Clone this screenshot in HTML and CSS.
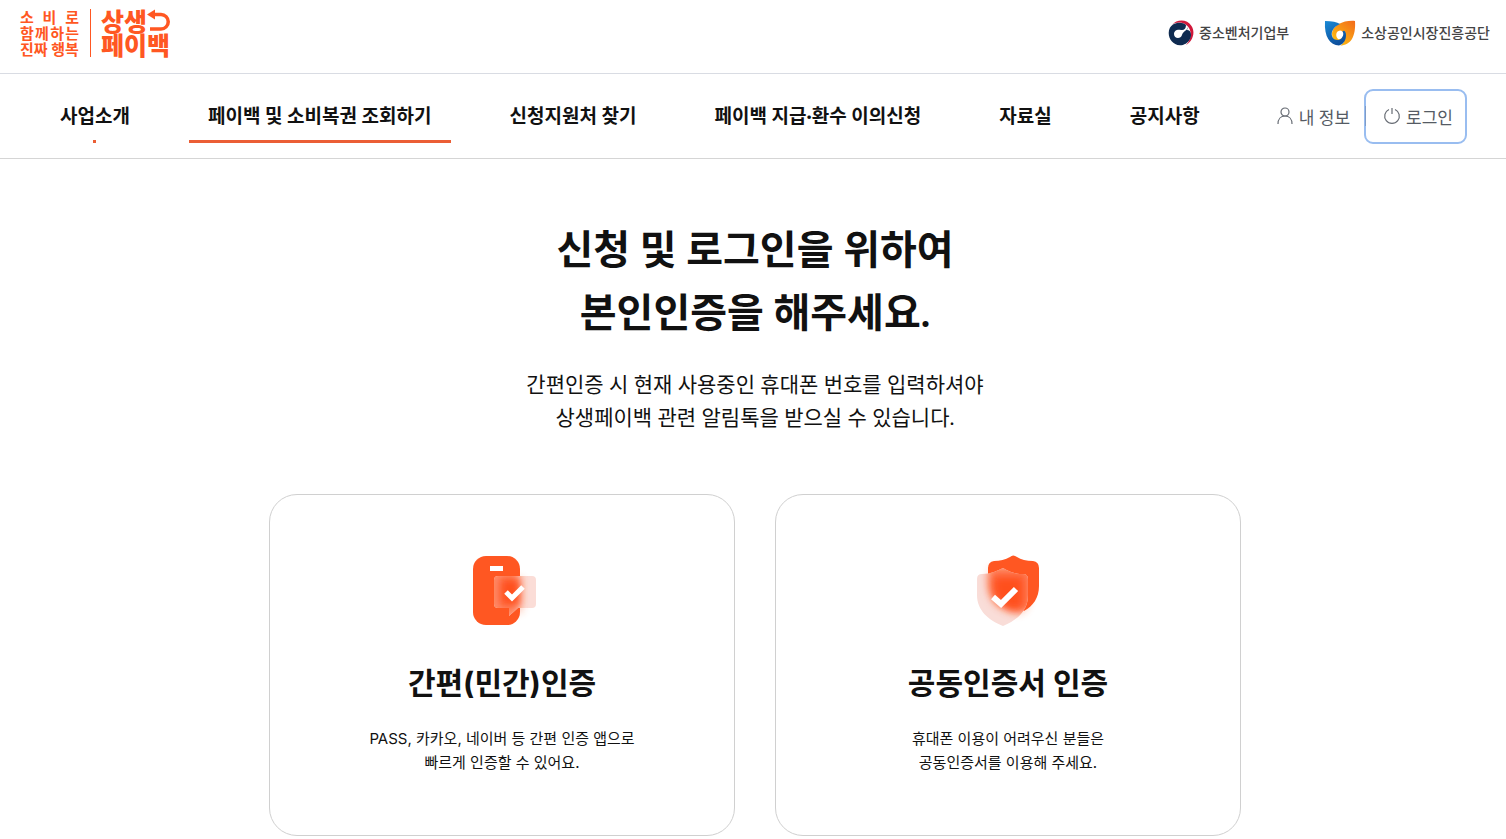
FILE: index.html
```html
<!DOCTYPE html>
<html lang="ko">
<head>
    <meta charset="UTF-8">
    <meta name="viewport" content="width=device-width, initial-scale=1.0">
    <title>상생페이백</title>
    <link rel="stylesheet" href="styles.css">
</head>
<body>
    <header>
        <div class="top-bar">
            <a href="#" class="logo">
                <span class="slogan">
                    <span class="slogan-line"><span>소</span><span>비</span><span>로</span></span>
                    <span class="slogan-line"><span>함</span><span>께</span><span>하</span><span>는</span></span>
                    <span class="slogan-line">진짜 행복</span>
                </span>
                <span class="brand">
                    <span class="brand-line">상생<svg width="24" height="24" viewBox="0 0 24 24" aria-hidden="true"><path d="M6 5.500H14A6.500 6.500 0 0 1 14 20H3" fill="none" stroke="#ff5722" stroke-width="3.500"/><path d="M0 5.500L8 0.500V10.500Z" fill="#ff5722"/></svg></span>
                    <span class="brand-line">페이백</span>
                </span>
            </a>
            <div class="partners">
                <a href="#" class="partner">
                    <svg width="26" height="26" viewBox="0 0 26 26" aria-hidden="true">
                        <path d="M4 5C9 -1 19 -1 23.500 6C28 13 24 22 18 25C23 20 24 13 21 8C17 2 9 1 4 5Z" fill="#d0173a"/>
                        <path d="M5 4.500C9 2 15 2 18 5C20 7 20 8 19 10C23 10 24 15 22 19C20 23 16 25.300 12 25.300C5 25 0.700 19 0.700 13C0.700 9 2.500 6 5 4.500Z" fill="#0f2b50"/>
                        <path d="M20 7C19 11 15 11 14 15C13 19 6 19 6 14C6 10 10 9 13 10C16 10.500 18 9 18 5Z" fill="#fff"/>
                    </svg>
                    <span>중소벤처기업부</span>
                </a>
                <a href="#" class="partner">
                    <svg width="32" height="26" viewBox="0 0 32 26" aria-hidden="true">
                        <defs>
                            <linearGradient id="leafBlue" x1="0" y1="0" x2="0.500" y2="1"><stop offset="0" stop-color="#1a8ad6"/><stop offset="1" stop-color="#0d4f9c"/></linearGradient>
                            <linearGradient id="leafOrange" x1="1" y1="0" x2="0.200" y2="1"><stop offset="0" stop-color="#f26a1b"/><stop offset="1" stop-color="#fdc010"/></linearGradient>
                        </defs>
                        <path d="M31 1C20 0 9 5 8 13C8 17 9 20 12 22H20C18 24 18 25 16 25.500C27 25.500 32 16 31 1Z" fill="url(#leafOrange)"/>
                        <path d="M1 1C8 1 13 2 16 4C9 7 7 12 8 16C9 19 11 20 14 20C17 20 19 17 18 13C19 9 22 11 22 15C22 20 20 24 15 25.500C6 25 0 17 1 1Z" fill="url(#leafBlue)"/>
                        <path d="M14 19C11 16 12 11 16 10.500C20 11 20 15 18 17.500C17 19 15.500 19.500 14 19Z" fill="#fff"/>
                    </svg>
                    <span>소상공인시장진흥공단</span>
                </a>
            </div>
        </div>
        <nav class="main-nav">
            <ul class="menu">
                <li class="dot"><a href="#">사업소개</a></li>
                <li class="active"><a href="#">페이백 및 소비복권 조회하기</a></li>
                <li><a href="#">신청지원처 찾기</a></li>
                <li><a href="#">페이백 지급·환수 이의신청</a></li>
                <li><a href="#">자료실</a></li>
                <li><a href="#">공지사항</a></li>
            </ul>
            <div class="user-menu">
                <a href="#" class="my-info">
                    <svg width="16" height="18" viewBox="0 0 16 18" fill="none" stroke="#666b73" stroke-width="1.200" aria-hidden="true"><circle cx="8" cy="5" r="4"/><path d="M1 17C1 12 4 9 8 9S15 12 15 17"/></svg>
                    내 정보
                </a>
                <button type="button" class="login">
                    <svg width="18" height="18" viewBox="0 0 18 18" fill="none" stroke="#666b73" stroke-width="1.200" aria-hidden="true"><path d="M6 2.500A7.300 7.300 0 1 0 12 2.500M9 1V7"/></svg>
                    로그인
                </button>
            </div>
        </nav>
    </header>

    <main>
        <h1>신청 및 로그인을 위하여<br>본인인증을 해주세요.</h1>
        <p class="guide">간편인증 시 현재 사용중인 휴대폰 번호를 입력하셔야<br>상생페이백 관련 알림톡을 받으실 수 있습니다.</p>

        <div class="cards">
            <a href="#" class="card">
                <svg width="80" height="80" viewBox="0 0 80 80" aria-hidden="true">
                    <defs>
                        <filter id="blur" x="-50%" y="-50%" width="200%" height="200%"><feGaussianBlur stdDeviation="4"/></filter>
                        <clipPath id="bubble"><path d="M36 26H70Q74 26 74 30V54Q74 58 70 58H56L47 66V58H36Q32 58 32 54V30Q32 26 36 26Z"/></clipPath>
                    </defs>
                    <rect x="36" y="28" width="24" height="34" fill="#ff5722" opacity="0.400" filter="url(#blur)"/>
                    <rect x="11" y="6" width="47" height="69" rx="13" fill="#ff5722"/>
                    <rect x="28" y="16" width="13" height="5" fill="#fff"/>
                    <g clip-path="url(#bubble)">
                        <rect x="32" y="26" width="42" height="40" fill="#fbddd7"/>
                        <rect x="20" y="20" width="36" height="50" fill="#ff8a68" filter="url(#blur)"/>
                        <rect x="38" y="28" width="20" height="28" fill="#ff4f1f" filter="url(#blur)"/>
                    </g>
                    <path d="M44 42L50 48L61 37" fill="none" stroke="#fff" stroke-width="5"/>
                </svg>
                <h2>간편(민간)인증</h2>
                <p>PASS, 카카오, 네이버 등 간편 인증 앱으로<br>빠르게 인증할 수 있어요.</p>
            </a>
            <a href="#" class="card">
                <svg width="80" height="80" viewBox="0 0 80 80" aria-hidden="true">
                    <defs>
                        <clipPath id="shield"><path d="M35 18Q38 20 43 22Q48 24 55 24Q60 24 60 29V45C60 60 50 70 35 76C20 70 9 60 9 45V29Q9 24 14 24Q21 24 26 22Q31 20 35 18Z"/></clipPath>
                    </defs>
                    <path d="M22 18H60V56L52 64L22 50Z" fill="#ff5722" opacity="0.400" filter="url(#blur)"/>
                    <path d="M42 7Q45 4 49 7Q55 11 65 11Q71 12 71 18V36C71 48 65 56 56 61L20 36V18Q20 12 26 11Q35 11 42 7Z" fill="#ff5722"/>
                    <g clip-path="url(#shield)">
                        <rect x="9" y="16" width="52" height="61" fill="#f9ddd8"/>
                        <path d="M20 16H66V60Q50 66 38 58Q22 52 20 36Z" fill="#ff7a52" filter="url(#blur)"/>
                        <path d="M25 26H56V56Q48 64 36 57Q25 50 25 38Z" fill="#ff4f1f" filter="url(#blur)"/>
                    </g>
                    <path d="M25 47L33 54L48 39" fill="none" stroke="#fff" stroke-width="6"/>
                </svg>
                <h2>공동인증서 인증</h2>
                <p>휴대폰 이용이 어려우신 분들은<br>공동인증서를 이용해 주세요.</p>
            </a>
        </div>
    </main>
</body>
</html>
```
FILE: styles.css
```css
* {
    box-sizing: border-box;
}
body {
    margin: 0;
    font-family: "Lato", "Noto Sans CJK KR", sans-serif;
    color: #111;
    background-color: #fff;
}
a {
    color: inherit;
    text-decoration: none;
}
svg {
    display: block;
    flex-shrink: 0;
}
.top-bar {
    display: flex;
    justify-content: space-between;
    align-items: center;
    height: 74px;
    padding: 0 16px 8px 20px;
    border-bottom: 1px solid #d9dce3;
}
.logo {
    display: flex;
    align-items: center;
    color: #ff5722;
}
.slogan {
    width: 71px;
    padding-right: 11px;
    border-right: 1px solid #ff5722;
    font-size: 15px;
    font-weight: 700;
    line-height: 16px;
    white-space: nowrap;
}
.slogan-line {
    display: flex;
    justify-content: space-between;
}
.brand {
    margin-left: 10px;
    font-size: 25px;
    font-weight: 900;
    line-height: 24px;
}
.brand-line {
    display: flex;
}
.partners {
    display: flex;
    gap: 35px;
}
.partner {
    display: flex;
    align-items: center;
    gap: 5px;
    font-size: 14px;
    font-weight: 500;
    line-height: 26px;
    color: #444;
}
.main-nav {
    display: flex;
    justify-content: space-between;
    align-items: center;
    height: 85px;
    padding: 0 39px 0 41px;
    border-bottom: 1px solid #d5d5d5;
    white-space: nowrap;
}
.menu {
    display: flex;
    gap: 40px;
    margin: 0;
    padding: 0;
    list-style: none;
}
.menu a {
    display: block;
    position: relative;
    padding: 0 19px;
    font-size: 19px;
    font-weight: 700;
    line-height: 54px;
}
.menu .active a::after,
.menu .dot a::after {
    content: "";
    position: absolute;
    left: 0;
    bottom: 0;
    width: 100%;
    height: 3px;
    background-color: #eb5e35;
}
.menu .dot a::after {
    left: 48%;
    width: 3px;
}
.user-menu {
    display: flex;
    align-items: center;
    gap: 14px;
    font-size: 17px;
    color: #555b64;
}
.my-info {
    display: flex;
    align-items: center;
    gap: 6px;
}
.login {
    display: flex;
    align-items: center;
    justify-content: center;
    gap: 5px;
    position: relative;
    height: 55px;
    padding: 0 12px 0 17px;
    border: 2px solid #99bdf0;
    border-radius: 9px;
    background-color: #fff;
    font: inherit;
    color: inherit;
}
.login::before {
    content: "";
    position: absolute;
    left: -1px;
    width: 1px;
    height: 20px;
    background-color: #7f9cc8;
}
main {
    padding: 59px 16px 0 20px;
    text-align: center;
}
h1 {
    margin: 0;
    font-size: 40px;
    font-weight: 700;
    line-height: 63px;
}
.guide {
    margin: 23px 0 0;
    font-size: 21px;
    line-height: 33px;
}
.cards {
    display: flex;
    gap: 40px;
    max-width: 972px;
    margin: 61px auto 0;
    font-family: "Inter", "Noto Sans CJK KR", sans-serif;
}
.card {
    flex: 1;
    display: flex;
    flex-direction: column;
    align-items: center;
    padding: 55px 20px 60px;
    border: 1px solid #d0d0d0;
    border-radius: 28px;
}
.card h2 {
    margin: 31px 0 0;
    font-size: 30px;
    font-weight: 700;
    line-height: 45px;
}
.card p {
    margin: 21px 0 0;
    font-size: 15px;
    line-height: 24px;
}
```
